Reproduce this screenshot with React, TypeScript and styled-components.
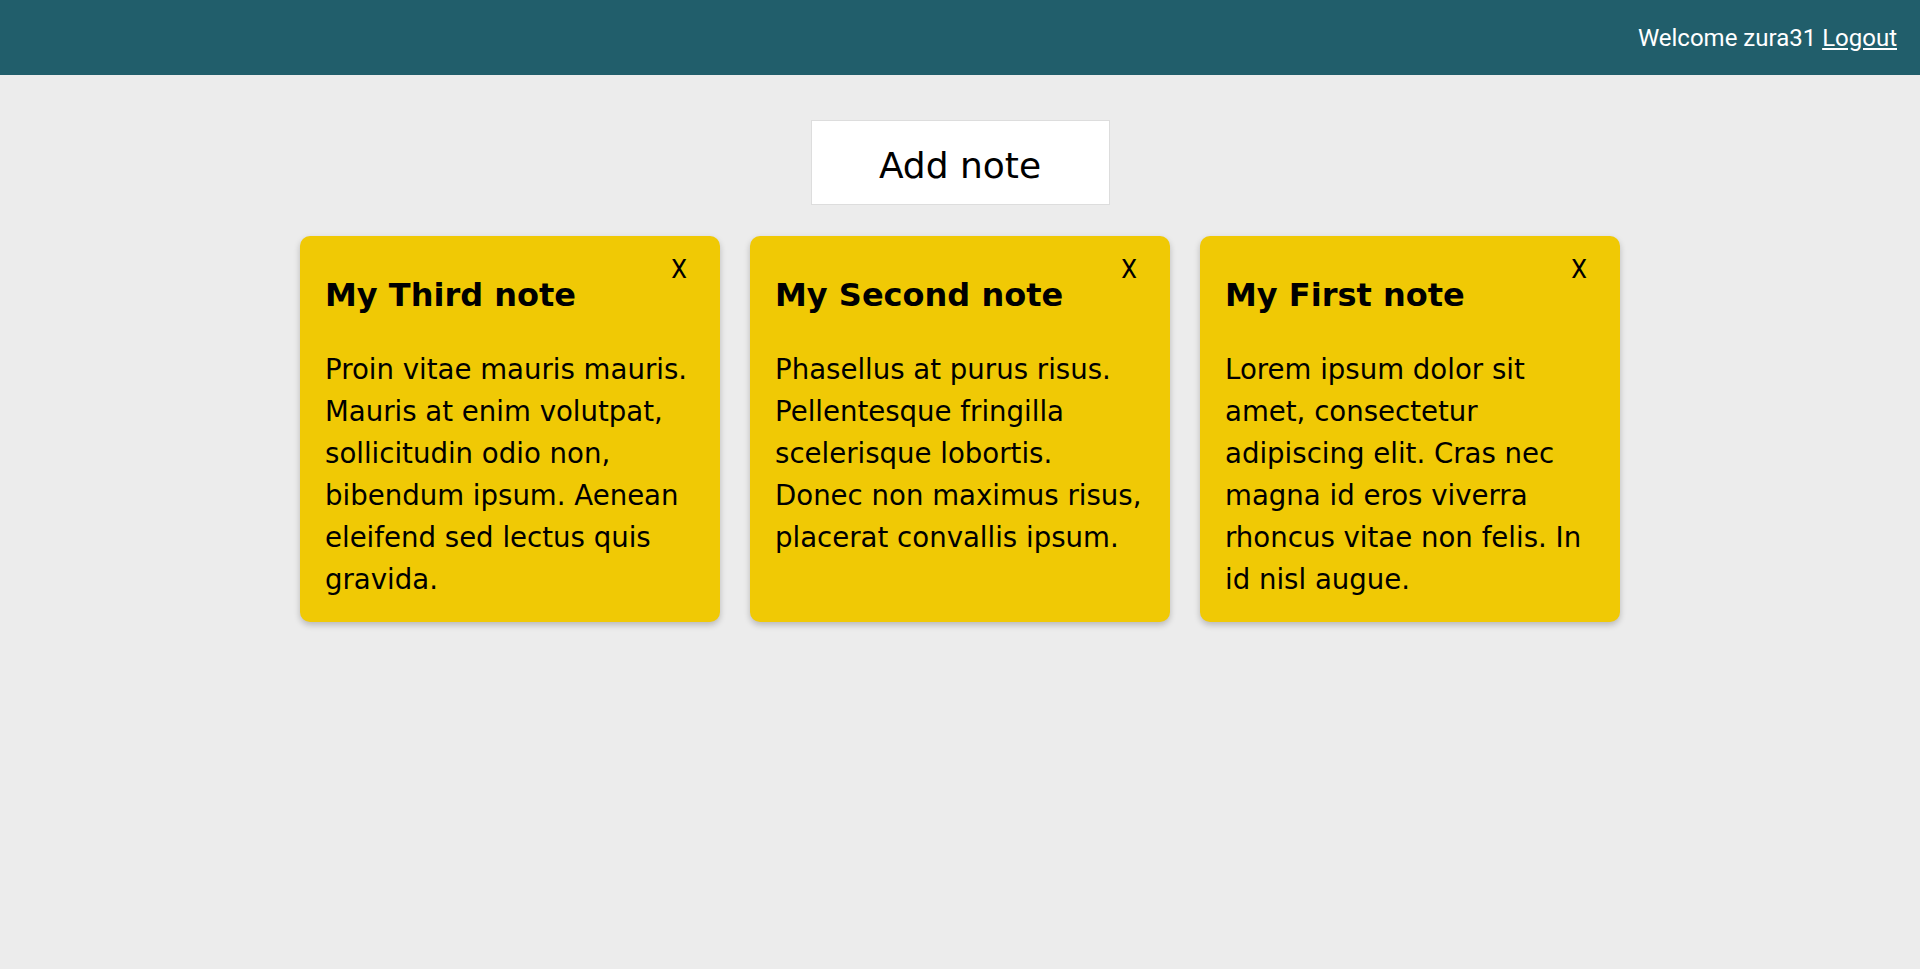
import styled, { createGlobalStyle } from 'styled-components'

const notes = [
  {
    id: 3,
    title: `My Third note`,
    content: `Proin vitae mauris mauris. Mauris at enim volutpat, sollicitudin odio non, bibendum ipsum. Aenean eleifend sed lectus quis gravida.`,
  },
  {
    id: 2,
    title: `My Second note`,
    content: `Phasellus at purus risus. Pellentesque fringilla scelerisque lobortis. Donec non maximus risus, placerat convallis ipsum.`,
  },
  {
    id: 1,
    title: `My First note`,
    content: `Lorem ipsum dolor sit amet, consectetur adipiscing elit. Cras nec magna id eros viverra rhoncus vitae non felis. In id nisl augue.`,
  },
]

const GlobalStyle = createGlobalStyle`
  * {
    box-sizing: border-box;
  }

  body {
    margin: 0;
    min-height: 100vh;
    background-color: #ececec;
    font-family: "DejaVu Sans", sans-serif;
  }
`

export default function App() {
  return (
    <>
      <GlobalStyle />
      <Header>
        <Welcome>
          Welcome zura31 <LogoutLink href="#">Logout</LogoutLink>
        </Welcome>
      </Header>
      <Main>
        <AddButton type="button">Add note</AddButton>
        <NoteList>
          {notes.map((note) => (
            <Note key={note.id}>
              <CloseButton type="button">X</CloseButton>
              <NoteTitle>{note.title}</NoteTitle>
              <NoteContent>{note.content}</NoteContent>
            </Note>
          ))}
        </NoteList>
      </Main>
    </>
  )
}

const Header = styled.header`
  display: flex;
  align-items: center;
  justify-content: flex-end;
  height: 75px;
  padding: 0 23px;
  background-color: #215e6b;
`

const Welcome = styled.p`
  margin: 0;
  color: #ffffff;
  font-family: Roboto, "Liberation Sans", sans-serif;
  font-size: 24px;
`

const LogoutLink = styled.a`
  color: #ffffff;
  text-decoration: underline;
`

const Main = styled.main`
  display: flex;
  flex-direction: column;
  align-items: center;
  padding-top: 45px;
`

const AddButton = styled.button`
  display: flex;
  align-items: center;
  justify-content: center;
  width: 299px;
  height: 85px;
  padding: 6px 0 0;
  border: 1px solid #dddddd;
  background-color: #ffffff;
  color: #000000;
  font-family: "DejaVu Sans", sans-serif;
  font-size: 36px;
  cursor: pointer;
`

const NoteList = styled.div`
  display: flex;
  justify-content: center;
  gap: 30px;
  margin-top: 31px;
`

const Note = styled.article`
  position: relative;
  width: 420px;
  padding: 25px 25px 21px;
  border-radius: 10px;
  background-color: #f0c905;
  box-shadow: 0 3px 6px rgba(0, 0, 0, 0.22);
`

const CloseButton = styled.button`
  position: absolute;
  top: 21px;
  right: 33px;
  padding: 0;
  border: none;
  background: none;
  color: #000000;
  font-family: Roboto, "Liberation Sans", sans-serif;
  font-size: 25px;
  line-height: 1;
  cursor: pointer;
`

const NoteTitle = styled.h2`
  margin: 16px 0 0;
  font-size: 32px;
  font-weight: bold;
  line-height: 36px;
`

const NoteContent = styled.p`
  margin: 36px 0 0;
  font-size: 27.6px;
  line-height: 42px;
`
